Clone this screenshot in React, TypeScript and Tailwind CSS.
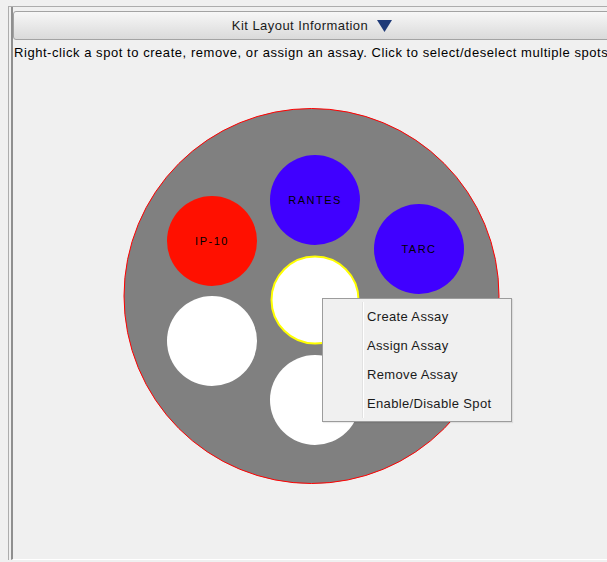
import React from 'react';

const spots = [
  { id: 'rantes', cx: 302, cy: 139, fill: '#4000ff', label: 'RANTES' },
  { id: 'ip10', cx: 199, cy: 180, fill: '#ff1000', label: 'IP-10' },
  { id: 'tarc', cx: 406, cy: 188, fill: '#4000ff', label: 'TARC' },
  { id: 'sel', cx: 302, cy: 239, fill: '#ffffff', label: '', selected: true },
  { id: 'w1', cx: 199, cy: 280, fill: '#ffffff', label: '' },
  { id: 'w2', cx: 302, cy: 339, fill: '#ffffff', label: '' },
];

const menuItems = ['Create Assay', 'Assign Assay', 'Remove Assay', 'Enable/Disable Spot'];

const KitCanvas = () => (
  <svg width="600" height="496" className="block">
    <circle cx="298.5" cy="235" r="187.5" fill="#808080" stroke="#ff0000" strokeWidth="1" />
    {spots.map((s) => (
      <g key={s.id}>
        <circle
          cx={s.cx}
          cy={s.cy}
          r={s.selected ? 43.5 : 45}
          fill={s.fill}
          stroke={s.selected ? '#ffff00' : 'none'}
          strokeWidth={s.selected ? 2 : 0}
        />
        {s.label && (
          <text
            x={s.cx}
            y={s.cy + 4}
            textAnchor="middle"
            fontSize="11"
            letterSpacing="1.5"
            fontFamily="'Liberation Sans', Arial, sans-serif"
            fill="#000"
          >
            {s.label}
          </text>
        )}
      </g>
    ))}
  </svg>
);

export default function App() {
  return (
    <div className="relative w-[607px] h-[562px] overflow-hidden bg-[#f0f0f0] font-['Liberation_Sans',Arial,sans-serif] text-black">
      <div className="ml-[8px] mt-[6px] h-[554px] border-l border-t border-[#adadad]">
        <div className="ml-[2px] h-full border-l-2 border-b border-[#8f8f8f] border-b-[#ffffff]">
          <div className="pt-[4px]">
            <div className="w-[598px] h-[29px] rounded-[3px] border border-[#a3a3a3] bg-gradient-to-b from-[#f7f7f7] to-[#dadada] flex items-center justify-center gap-[9px]">
              <span className="text-[13px] tracking-[0.45px] text-[#1a1a1a]">Kit Layout Information</span>
              <svg width="15" height="12" viewBox="0 0 15 12">
                <polygon points="0,0 15,0 7.5,12" fill="#1e3a78" />
              </svg>
            </div>
            <div className="mt-[5px] pl-[1px] text-[13px] tracking-[0.55px] leading-[16px] whitespace-nowrap">
              Right-click a spot to create, remove, or assign an assay. Click to select/deselect multiple spots
            </div>
            <KitCanvas />
          </div>
        </div>
      </div>

      <div className="absolute left-[322px] top-[298px] w-[190px] border border-[#9c9c9c] bg-[#f0f0f0] py-[3px] shadow-[1px_1px_1px_rgba(0,0,0,0.08)]">
        <div className="absolute left-[39px] top-[3px] bottom-[3px] w-[2px] border-l border-[#e2e2e2] bg-white" />
        {menuItems.map((item) => (
          <div key={item} className="h-[29px] pl-[44px] flex items-center text-[13px] tracking-[0.35px] text-[#1a1a1a]">
            {item}
          </div>
        ))}
      </div>
    </div>
  );
}
